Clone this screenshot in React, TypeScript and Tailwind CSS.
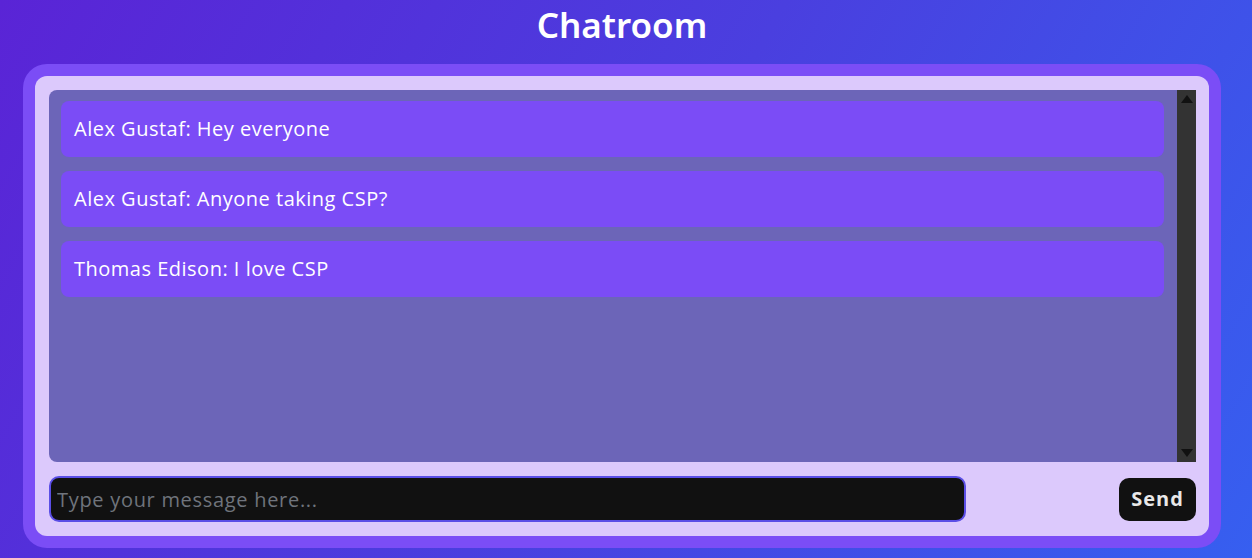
import React from "react";

const messages = [
  "Alex Gustaf: Hey everyone",
  "Alex Gustaf: Anyone taking CSP?",
  "Thomas Edison: I love CSP",
];

export default function App() {
  return (
    <div className="w-[1252px] h-[558px] overflow-hidden bg-[linear-gradient(120deg,#5a24d6_0%,#4a3fdf_50%,#365ff0_100%)] flex flex-col">
      <h1 className="ml-[23px] w-[1198px] h-[64px] pb-[16px] flex items-center justify-center text-white text-[35px] font-semibold font-['Noto_Sans',sans-serif] leading-none">
        Chatroom
      </h1>
      <div className="ml-[23px] w-[1198px] h-[484px] rounded-[24px] bg-[#7b4df6] p-[12px]">
        <div className="h-full rounded-[12px] bg-[#dcc9fc] p-[14px] pr-[13px] flex flex-col gap-[14px]">
          <div className="h-[373px] rounded-l-[8px] bg-[#6c65b8] flex">
            <div className="flex-1 pl-[12px] pr-[13px] pt-[11px] flex flex-col gap-[14px]">
              {messages.map((m) => (
                <div
                  key={m}
                  className="h-[56px] rounded-[8px] bg-[#7b4cf6] flex items-center pl-[13px] text-white text-[20px] tracking-[0.5px] font-['Open_Sans',sans-serif] font-medium"
                >
                  {m}
                </div>
              ))}
            </div>
            <div className="w-[19px] bg-[#333333] flex flex-col items-center justify-between py-[5px]">
              <div className="w-0 h-0 border-l-[6px] border-r-[6px] border-b-[8px] border-l-transparent border-r-transparent border-b-[#111]" />
              <div className="w-0 h-0 border-l-[6px] border-r-[6px] border-t-[8px] border-l-transparent border-r-transparent border-t-[#111]" />
            </div>
          </div>
          <div className="flex items-center justify-between">
            <input
              className="w-[917px] h-[46px] rounded-[10px] border-2 border-[#5b4ee6] bg-[#111111] px-[6px] text-[20px] tracking-[0.7px] text-white placeholder:text-[#6f747c] outline-none font-['Open_Sans',sans-serif]"
              placeholder="Type your message here..."
            />
            <button className="w-[77px] h-[43px] rounded-[10px] bg-[#111111] text-[#e8e8e8] text-[20px] tracking-[1px] font-bold font-['Open_Sans',sans-serif]">
              Send
            </button>
          </div>
        </div>
      </div>
    </div>
  );
}
